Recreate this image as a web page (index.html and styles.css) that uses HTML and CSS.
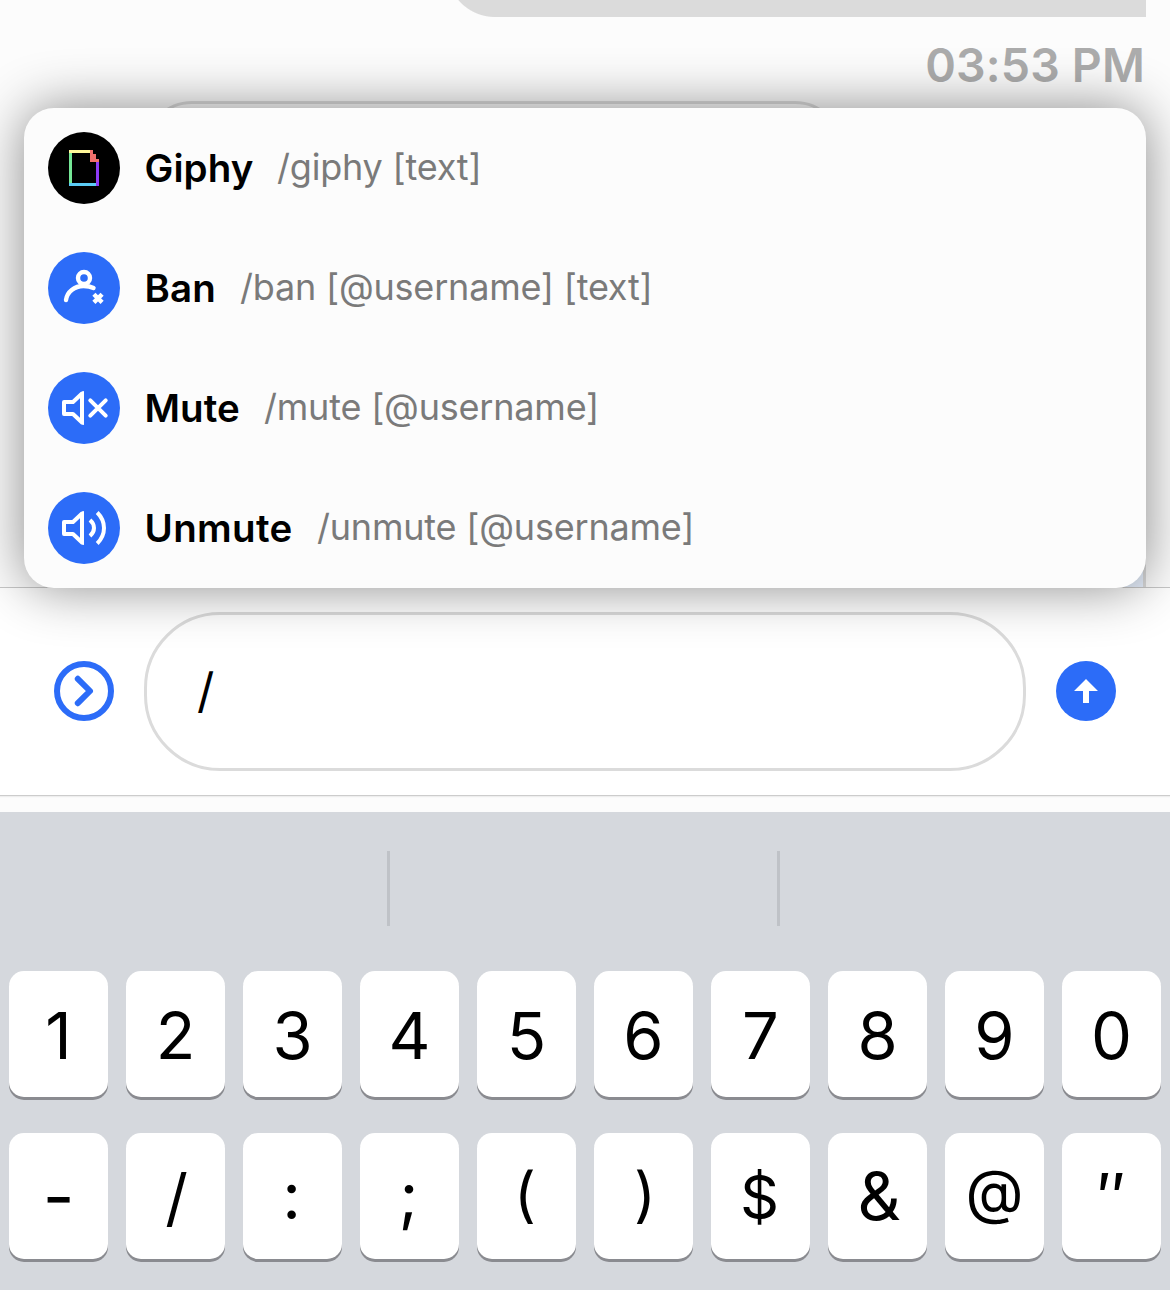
FILE: index.html
```html
<!DOCTYPE html>
<html lang="en">
<head>
<meta charset="utf-8">
<title>Chat commands</title>
<link rel="stylesheet" href="styles.css">
</head>
<body>
<main class="screen">
  <section class="chat">
    <div class="bubble bubble-grey"></div>
    <div class="time"><span>03:53 PM</span></div>
    <div class="bubble bubble-outline"></div>
    <div class="bubble bubble-own"></div>
    <div class="commands">
      <div class="command">
        <svg class="avatar" viewBox="0 0 72 72"><circle cx="36" cy="36" r="36" fill="#000"/><g shape-rendering="crispEdges"><path fill="#fff799" d="M21 18h21v3H21z"/><path fill="#75e796" d="M21 21h3v30h-3z"/><path fill="#5bcbf5" d="M21 51h27v3H21z"/><path fill="#8d3bf7" d="M48 30h3v24h-3z"/><path fill="#f1706c" d="M42 18h3v4h3v5h3v3h-9z"/></g></svg>
        <span class="name n1">Giphy</span><span class="args">/giphy [text]</span>
      </div>
      <div class="command">
        <svg class="avatar" viewBox="0 0 72 72"><circle cx="36" cy="36" r="36" fill="#2c6cf8"/><g fill="none" stroke="#fff" stroke-width="4.400"><circle cx="36" cy="26" r="6"/><path stroke-linecap="round" d="M18 48C19 40 26.500 34 35.500 34c4 0 7.500.7 10 2"/><path d="M45.900 42.200l8.200 8.200M54.100 42.200l-8.200 8.200"/></g></svg>
        <span class="name n2">Ban</span><span class="args">/ban [@username] [text]</span>
      </div>
      <div class="command">
        <svg class="avatar" viewBox="0 0 72 72"><circle cx="36" cy="36" r="36" fill="#2c6cf8"/><g fill="none" stroke="#fff" stroke-width="4"><path stroke-linejoin="round" d="M16 30h9l9-8.500v29L25 42h-9z"/><path fill="#fff" stroke="none" d="M32 22.500l2.500-3.200q1.500-.8 1.500.5v32.400q0 1.300-1.500.5L32 49.500z"/><path stroke-linecap="round" d="M42.300 28.300l15.400 15.400M57.700 28.300L42.300 43.700"/></g></svg>
        <span class="name n3">Mute</span><span class="args">/mute [@username]</span>
      </div>
      <div class="command">
        <svg class="avatar" viewBox="0 0 72 72"><circle cx="36" cy="36" r="36" fill="#2c6cf8"/><g fill="none" stroke="#fff" stroke-width="4"><path stroke-linejoin="round" d="M16 30h9l9-8.500v29L25 42h-9z"/><path fill="#fff" stroke="none" d="M32 22.500l2.500-3.200q1.500-.8 1.500.5v32.400q0 1.300-1.500.5L32 49.500z"/><path d="M42 28q4 3.500 4 8t-4 8M49.200 20.500Q56 27.300 56 36t-6.800 15.500"/></g></svg>
        <span class="name n4">Unmute</span><span class="args">/unmute [@username]</span>
      </div>
    </div>
  </section>
  <section class="composer">
    <svg class="round-btn" viewBox="0 0 60 60" fill="none" stroke="#2c6cf8" stroke-width="6"><circle cx="30" cy="30" r="27"/><path stroke-linecap="round" stroke-linejoin="round" d="M23.800 17.800L36 30 23.800 42.200"/></svg>
    <div class="input"><span>/</span></div>
    <svg class="round-btn" viewBox="0 0 60 60"><circle cx="30" cy="30" r="30" fill="#2c6cf8"/><path fill="#fff" d="M30 18l12 12h-9v12h-6V30h-9z"/></svg>
  </section>
  <section class="keyboard">
    <div class="suggestions"><i></i><i></i><i></i></div>
    <div class="keys">
      <b>1</b><b>2</b><b>3</b><b>4</b><b>5</b><b>6</b><b>7</b><b>8</b><b>9</b><b>0</b>
      <b class="dash">-</b><b class="slash">/</b><b class="colon">:</b><b class="colon">;</b><b class="paren">(</b><b class="paren close">)</b><b class="dollar">$</b><b class="amp">&amp;</b><b class="at">@</b><b class="quote">″</b>
    </div>
  </section>
</main>
</body>
</html>
```
FILE: styles.css
```css
* { box-sizing: border-box; }
body { margin: 0; background: #fcfcfc; font-family: Inter, "Liberation Sans", sans-serif; color: #000; }
svg { display: block; flex: none; }
.screen { width: 1170px; height: 1290px; overflow: hidden; display: flex; flex-direction: column; }

.chat { position: relative; z-index: 1; flex: none; height: 587px; padding: 0 24px; display: flex; flex-direction: column; }
.bubble-grey { align-self: flex-end; width: 699px; height: 17px; background: radial-gradient(circle 48px at 48px -31px, #dbdbdb 47.500px, transparent 48.500px) 0 0 / 48px 17px no-repeat, linear-gradient(#dbdbdb, #dbdbdb) 48px 0 no-repeat; }
.time { height: 84px; display: flex; justify-content: flex-end; padding: 20px 1px 0 0; font-size: 46.500px; line-height: 57px; font-weight: 600; letter-spacing: .15px; color: #acacac; white-space: nowrap; }
.bubble-outline { flex: none; width: 699px; height: 300px; margin-left: 120px; border: 3px solid #dbdbdb; border-radius: 48px; }
.bubble-own { flex: 1; align-self: flex-end; width: 600px; margin-top: 40px; background: #e9f2ff; border: 3px solid #dbdbdb; border-bottom: 0; border-radius: 48px 48px 0 0; }

.commands { position: absolute; left: 24px; top: 108px; width: 1122px; height: 480px; background: #fcfcfc; border-radius: 30px; box-shadow: 0 0 54px rgba(0,0,0,.45); display: grid; grid-template-rows: repeat(4, 120px); }
.command { display: flex; align-items: center; padding-left: 24px; white-space: nowrap; }
.name { margin-left: 25px; font-size: 38.500px; font-weight: 600; line-height: 48px; text-indent: -.5px; letter-spacing: .1px; }
.args { margin-bottom: 3px; font-size: 36px; line-height: 44px; letter-spacing: -.2px; color: #7a7a7a; }
.avatar { width: 72px; height: 72px; }
.n1 { width: 132px; }
.n2 { width: 95px; }
.n3 { width: 119px; }
.n4 { width: 172px; letter-spacing: .35px; }

.composer { flex: none; height: 209px; display: flex; align-items: flex-start; justify-content: space-between; padding: 24px 54px; background: #fff; border-top: 1px solid #c8c8c8; border-bottom: 1px solid #ccc; box-shadow: 0 1px 1px #eee; }
.round-btn { width: 60px; height: 60px; margin-top: 49px; }
.input { width: 882px; height: 159px; border: 3px solid #dbdbdb; border-radius: 76px; padding: 0 0 2px 50px; display: flex; align-items: center; font-size: 48px; }

.keyboard { flex: 1; margin-top: 16px; background: #d5d8dd; }
.suggestions { height: 159px; padding: 39px 0 45px; display: grid; grid-template-columns: 390px 390px 390px; }
.suggestions i { border-right: 3px solid #bfc2c7; }
.suggestions i:last-child { border: 0; }
.keys { padding: 0 9px; display: grid; grid-template-columns: repeat(10, 99px); grid-auto-rows: 126px; gap: 36px 18px; }
.keys b { display: flex; align-items: center; justify-content: center; padding-top: 4px; border-radius: 15px; background: #fff; box-shadow: 0 3px 0 #8a8b90; font-size: 65px; font-weight: 400; line-height: 78px; }
.keys .dash { padding: 0; font-size: 69px; }
.keys .slash { padding: 2px 0 0 2px; font-size: 63px; }
.keys .colon { padding: 0 2px 0 0; }
.keys .paren { padding: 0 3px 5px 0; font-size: 60px; }
.keys .close { padding: 0 0 5px 3px; }
.keys .dollar { padding: 1px 2px 0 0; font-size: 61px; }
.keys .amp { padding: 0 0 0 3px; font-size: 67px; }
.keys .at { padding: 0 0 11px; font-size: 60px; }
.keys .quote { padding-top: 2px; }
```
